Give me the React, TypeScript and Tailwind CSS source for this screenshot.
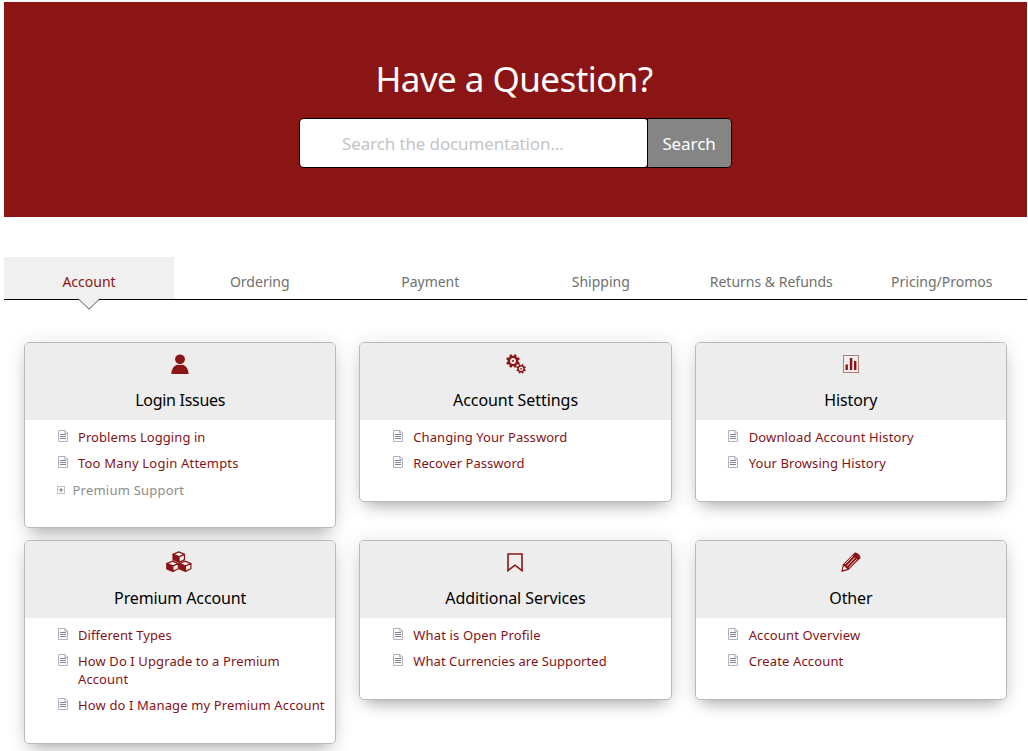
import type { ReactNode } from "react";

type Item = { label: ReactNode; tracking?: string; kind?: "folder" };
type CardData = { title: string; icon: ReactNode; titleClass?: string; items: Item[] };

const gearTeeth = (cx: number, cy: number, outer: number, inner: number, teeth: number) => {
  const points: string[] = [];
  const step = (Math.PI * 2) / teeth;
  const at = (r: number, a: number) => `${(cx + r * Math.cos(a)).toFixed(2)},${(cy + r * Math.sin(a)).toFixed(2)}`;
  for (let i = 0; i < teeth; i++) {
    const a = i * step + step / 2;
    points.push(at(inner, a - step * 0.32), at(outer, a - step * 0.2), at(outer, a + step * 0.2), at(inner, a + step * 0.32));
  }
  return `M${points.join("L")}Z`;
};

const ring = (cx: number, cy: number, r: number) =>
  `M${cx - r},${cy}a${r},${r} 0 1 0 ${r * 2},0a${r},${r} 0 1 0 ${-r * 2},0Z`;

function UserIcon() {
  return (
    <svg width="18" height="20" viewBox="0 0 18 20" fill="#8b1515">
      <circle cx="9" cy="5.3" r="4.9" />
      <path d="M0.4 20C0.4 15 3.2 11.2 6.6 10.7C8 11.2 10 11.2 11.4 10.7C14.8 11.2 17.6 15 17.6 20Z" />
    </svg>
  );
}

function GearsIcon() {
  return (
    <svg width="20" height="20" viewBox="0 0 20 20" fill="#8b1515" fillRule="evenodd" className="ml-px">
      <path d={gearTeeth(7, 7, 7, 5.4, 8) + ring(7, 7, 2.9)} />
      <circle cx="7" cy="7" r="1.1" />
      <path d={gearTeeth(15.1, 14.8, 4.9, 3.7, 8) + ring(15.1, 14.8, 2.2)} />
      <circle cx="15.1" cy="14.8" r="0.9" />
    </svg>
  );
}

function ChartIcon() {
  return (
    <svg width="16" height="18" viewBox="0 0 16 18">
      <rect x="0.5" y="0.5" width="15" height="17" fill="#f1eef0" stroke="#b07c76" />
      <path d="M2.5 9.5h2.4V15H2.5zM6.8 3h2.5V15H6.8zM11 6h2.4V15H11z" fill="#8b1515" />
    </svg>
  );
}

function Cube({ x, y }: { x: number; y: number }) {
  return (
    <g transform={`translate(${x} ${y})`} stroke="#8b1515" strokeWidth="1.2" strokeLinejoin="round">
      <path d="M0.7 3.2L6.4 0.7L12.2 3.2L6.8 5.6Z" fill="#f5f0f0" />
      <path d="M0.7 3.2L6.8 5.6V11L0.7 8.6Z" fill="#8b1515" />
      <path d="M6.8 5.6L12.2 3.2V8.4L6.8 11Z" fill="#f5f0f0" />
    </g>
  );
}

function CubesIcon() {
  return (
    <svg width="26" height="22" viewBox="0 0 26 22" className="-ml-[2px]">
      <Cube x={6.3} y={0.2} />
      <Cube x={0.1} y={9.4} />
      <Cube x={12.7} y={9.4} />
    </svg>
  );
}

function BookmarkIcon() {
  return (
    <svg width="16" height="19" viewBox="0 0 16 19" fill="none" stroke="#8b1515" strokeWidth="1.6">
      <path d="M1 1H15V17.6L8 12.2L1 17.6Z" />
    </svg>
  );
}

function PencilIcon() {
  return (
    <svg width="20" height="20" viewBox="0 0 20 20" fill="none">
      <path d="M13.6 0.8C15.2 -0.5 20.6 4.2 19.3 6.2L7.5 18L0.3 19.9L1.8 12.5Z" fill="#8b1515" />
      <path d="M11.9 3.9L4 12.2M13.9 5.6L6 13.9M15.9 7.3L8 15.6" stroke="#f6e6e7" strokeWidth="1" />
      <path d="M2.9 13.8L6.2 17L2.6 18L1.8 17.3Z" fill="#f6f0e6" />
    </svg>
  );
}

function PageIcon() {
  return (
    <svg width="10" height="12" viewBox="0 0 10 12" fill="none" className="mt-[2px] -ml-[0.5px] shrink-0">
      <path d="M0.5 0.5H7L9.5 3V11.5H0.5Z" fill="#fbfbfd" stroke="#b3b1c0" />
      <path d="M6.8 0.5V3.2H9.5" stroke="#9a96a8" strokeWidth="0.7" />
      <path d="M2 4.5H8M2 6.5H8M2 8.5H8" stroke="#85838f" />
    </svg>
  );
}

function PlusBoxIcon() {
  return (
    <svg width="8" height="8" viewBox="0 0 8 8" fill="none" className="mt-[5px] shrink-0">
      <rect x="0.5" y="0.5" width="7" height="7" stroke="#c4bfbf" />
      <path d="M1.8 4H6.2M4 1.8V6.2" stroke="#857c7c" />
    </svg>
  );
}

const cards: CardData[] = [
  {
    title: "Login Issues",
    titleClass: "tracking-[-0.3px]",
    icon: <UserIcon />,
    items: [
      { label: "Problems Logging in", tracking: "tracking-[0.07px]" },
      { label: "Too Many Login Attempts", tracking: "tracking-[0.2px]" },
      { label: "Premium Support", kind: "folder", tracking: "tracking-[0.22px]" },
    ],
  },
  {
    title: "Account Settings",
    titleClass: "tracking-[-0.05px]",
    icon: <GearsIcon />,
    items: [
      { label: "Changing Your Password", tracking: "tracking-[0.07px]" },
      { label: "Recover Password", tracking: "tracking-[0.03px]" },
    ],
  },
  {
    title: "History",
    titleClass: "tracking-[-0.1px]",
    icon: <ChartIcon />,
    items: [
      { label: "Download Account History" },
      { label: "Your Browsing History", tracking: "tracking-[0.08px]" },
    ],
  },
  {
    title: "Premium Account",
    icon: <CubesIcon />,
    titleClass: "tracking-[-0.12px]",
    items: [
      { label: "Different Types", tracking: "tracking-[0.06px]" },
      { label: <>How Do I Upgrade to a Premium<br />Account</>, tracking: "tracking-[0.11px]" },
      { label: "How do I Manage my Premium Account" },
    ],
  },
  {
    title: "Additional Services",
    icon: <BookmarkIcon />,
    titleClass: "tracking-[-0.08px]",
    items: [{ label: "What is Open Profile" }, { label: "What Currencies are Supported", tracking: "tracking-[0.06px]" }],
  },
  {
    title: "Other",
    titleClass: "tracking-[-0.15px]",
    icon: <PencilIcon />,
    items: [{ label: "Account Overview" }, { label: "Create Account" }],
  },
];

const tabs = ["Account", "Ordering", "Payment", "Shipping", "Returns & Refunds", "Pricing/Promos"];

function Card({ title, icon, items, titleClass = "" }: CardData) {
  return (
    <section className="overflow-hidden rounded-[5px] border border-[#b9b9b9] bg-white shadow-[0_9px_16px_-8px_rgba(0,0,0,0.33),0_2px_20px_rgba(0,0,0,0.12)]">
      <header className="flex h-[77px] flex-col items-center bg-[#ededed]">
        <div className="flex h-[42px] items-center justify-center">{icon}</div>
        <h2 className={`mt-1 text-[16px] leading-[22px] text-black ${titleClass}`}>{title}</h2>
      </header>
      <ul className="flex flex-col gap-2 pt-2 pb-[29px] pl-8">
        {items.map((item, i) =>
          item.kind === "folder" ? (
            <li key={i} className="-mb-px flex gap-[7.5px] pt-px text-[13px] leading-[18px] text-[#8c8c8c]">
              <PlusBoxIcon />
              <span className={item.tracking}>{item.label}</span>
            </li>
          ) : (
            <li key={i} className="flex gap-[10.5px] pl-px text-[13px] leading-[18px] whitespace-nowrap text-[#841317]">
              <PageIcon />
              <a href="#" className={item.tracking ?? "tracking-[0.14px]"}>{item.label}</a>
            </li>
          ),
        )}
      </ul>
    </section>
  );
}

export default function App() {
  return (
    <main className="h-[751px] w-[1028px] overflow-hidden bg-white pt-[2px] pr-px pl-1 font-['Noto_Sans','Open_Sans',sans-serif]">
      <div className="flex h-[215px] flex-col items-center bg-[#8b1515] pt-[53px]">
        <h1 className="pr-[3px] text-[35px] leading-[48px] font-normal tracking-[-0.56px] text-white">Have a Question?</h1>
        <form className="mt-[15px] flex h-[50px] w-[433px] overflow-hidden rounded-[5px] border border-black">
          <input
            type="text"
            placeholder="Search the documentation..."
            className="w-[347px] rounded-r-[3px] bg-white pt-[2px] pl-[42px] text-[17px] tracking-[-0.12px] outline-none placeholder:text-[#c4c4c4]"
          />
          <button type="button" className="flex-1 border-l border-black bg-[#858585] pt-[2px] pr-px text-[17px] tracking-[-0.1px] text-white">
            Search
          </button>
        </form>
      </div>

      <nav className="mt-10 grid h-[43px] grid-cols-6 border-b border-black">
        {tabs.map((tab, i) => (
          <a
            key={tab}
            href="#"
            className={
              i === 0
                ? "relative mr-[0.5px] bg-[#f0f0f0] pt-[15px] text-center text-[14px] leading-5 text-[#8b1515]"
                : "pt-[15px] text-center text-[14px] leading-5 text-[#707070]"
            }
          >
            {tab}
            {i === 0 && (
              <svg width="22" height="12" viewBox="0 0 22 12" className="absolute top-[41px] left-1/2 -translate-x-1/2">
                <path d="M0.5 1L11 11.2L21.5 1V0H0.5Z" fill="#f0f0f0" />
                <path d="M0.5 1L11 11.2L21.5 1" fill="none" stroke="#555555" />
              </svg>
            )}
          </a>
        ))}
      </nav>

      <div className="mt-[42px] grid grid-cols-3 items-start gap-x-[23px] gap-y-3 px-5">
        {cards.map((card) => (
          <Card key={card.title} {...card} />
        ))}
      </div>
    </main>
  );
}
